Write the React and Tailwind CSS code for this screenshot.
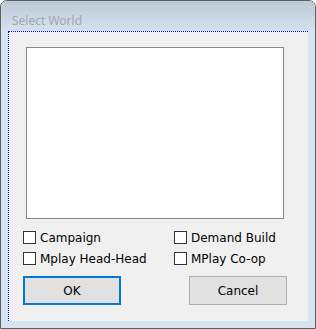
import React, { useState } from 'react';

const font = { fontFamily: '"DejaVu Sans", "Liberation Sans", sans-serif' };

function Check({ label, checked, onToggle }) {
  return (
    <label className="flex items-center gap-[4px] h-[13px] text-[12px] text-black cursor-default select-none" onClick={onToggle}>
      <span className="w-[13px] h-[13px] border border-[#333333] bg-white shrink-0 flex items-center justify-center text-[10px] leading-none">
        {checked ? '✓' : ''}
      </span>
      <span className="leading-none">{label}</span>
    </label>
  );
}

export default function App() {
  const [opts, setOpts] = useState({ campaign: false, demand: false, head: false, coop: false });
  const toggle = (k) => setOpts(prev => ({ ...prev, [k]: !prev[k] }));

  return (
    <div className="w-[316px] h-[329px] bg-white" style={font}>
      <div className="w-full h-full flex flex-col border border-[#5f5f5f] rounded-t-[7px] overflow-hidden bg-[#d6e4f1]">
        {/* Title bar */}
        <div className="h-[30px] shrink-0 bg-gradient-to-b from-[#bccad8] to-[#d4e2f0] flex items-center pl-[11px] pt-[9px]">
          <span className="text-[12px] text-[#a3a8ae]" style={{ fontFamily: '"Noto Sans", "Open Sans", sans-serif' }}>Select World</span>
        </div>

        {/* Client area */}
        <div className="flex-1 flex px-[7px] pb-[7px]">
          <div className="flex-1 bg-[#f0f0f0] border-t border-l border-dotted border-[#0000ff] flex flex-col pt-[15px]">
            <div className="ml-[17px] w-[258px] h-[172px] bg-white border border-[#828790]" />

            <div className="grid grid-cols-[151px_1fr] gap-y-[8px] mt-[12px] ml-[14px]">
              <Check label="Campaign" checked={opts.campaign} onToggle={() => toggle('campaign')} />
              <Check label="Demand Build" checked={opts.demand} onToggle={() => toggle('demand')} />
              <Check label="Mplay Head-Head" checked={opts.head} onToggle={() => toggle('head')} />
              <Check label="MPlay Co-op" checked={opts.coop} onToggle={() => toggle('coop')} />
            </div>

            <div className="flex mt-[11px] ml-[14px] gap-[68px]">
              <button className="w-[98px] h-[29px] bg-[#e1e1e1] border-2 border-[#0078d7] text-[12px] text-black">OK</button>
              <button className="w-[98px] h-[29px] bg-[#e1e1e1] border border-[#adadad] text-[12px] text-black">Cancel</button>
            </div>
          </div>
        </div>
      </div>
    </div>
  );
}
